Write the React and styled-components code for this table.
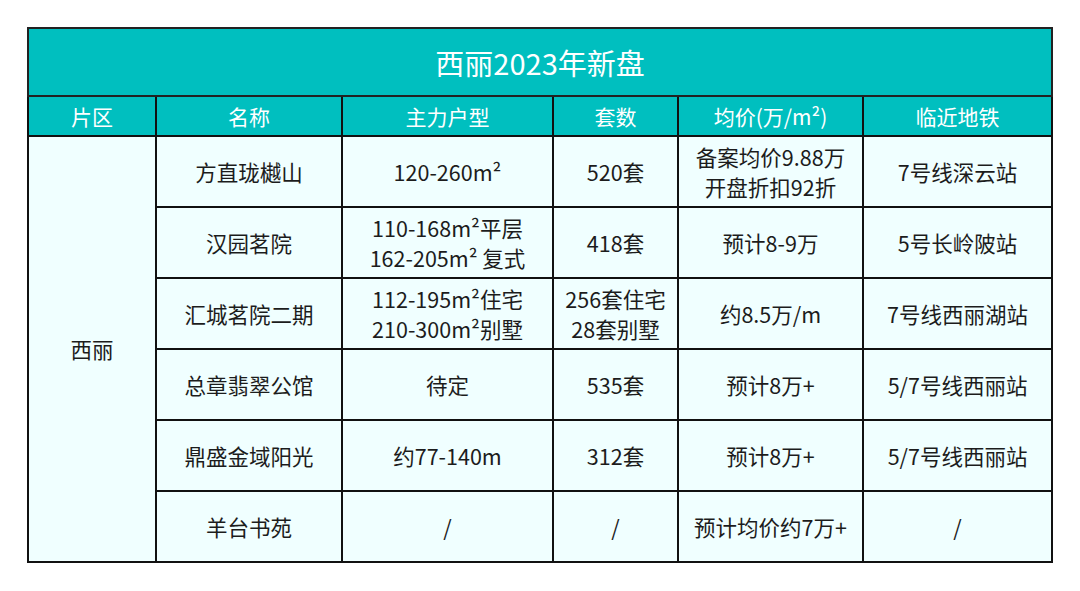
import React from 'react';
import styled, { createGlobalStyle } from 'styled-components';

const GlobalStyle = createGlobalStyle`
  body {
    margin: 0;
    background: #ffffff;
    font-family: "Noto Sans CJK SC", "Noto Sans", sans-serif;
  }
`;

const Page = styled.div`
  padding: 27px 0 0 27px;
`;

const Table = styled.table`
  border-collapse: collapse;
  table-layout: fixed;
  width: 1026px;
  color: #1c1c1c;
  font-size: 21.5px;
  text-align: center;
`;

const TitleCell = styled.th`
  height: 66px;
  padding: 0;
  background: #00bfbf;
  color: #ffffff;
  font-size: 29px;
  font-weight: 400;
  border: 2px solid #222;
`;

const HeadCell = styled.th`
  height: 38px;
  padding: 0;
  background: #00bfbf;
  color: #ffffff;
  font-size: 21px;
  font-weight: 400;
  border: 2px solid #111;
`;

const Cell = styled.td`
  height: 69px;
  padding: 0;
  background: #f0ffff;
  border: 2px solid #111;
  line-height: 30px;
  vertical-align: middle;
`;

const cols = [128, 186, 211, 125, 185, 189];
const heads = ['片区', '名称', '主力户型', '套数', '均价(万/m²)', '临近地铁'];

const rows = [
  ['方直珑樾山', ['120-260m²'], ['520套'], ['备案均价9.88万', '开盘折扣92折'], ['7号线深云站']],
  ['汉园茗院', ['110-168m²平层', '162-205m² 复式'], ['418套'], ['预计8-9万'], ['5号长岭陂站']],
  ['汇城茗院二期', ['112-195m²住宅', '210-300m²别墅'], ['256套住宅', '28套别墅'], ['约8.5万/m'], ['7号线西丽湖站']],
  ['总章翡翠公馆', ['待定'], ['535套'], ['预计8万+'], ['5/7号线西丽站']],
  ['鼎盛金域阳光', ['约77-140m'], ['312套'], ['预计8万+'], ['5/7号线西丽站']],
  ['羊台书苑', ['/'], ['/'], ['预计均价约7万+'], ['/']],
];

function Lines({ items }) {
  return items.map((t, i) => <div key={i}>{t}</div>);
}

export default function App() {
  return (
    <Page>
      <GlobalStyle />
      <Table>
        <colgroup>
          {cols.map((w, i) => <col key={i} style={{ width: w }} />)}
        </colgroup>
        <thead>
          <tr>
            <TitleCell colSpan={6}>西丽2023年新盘</TitleCell>
          </tr>
          <tr>
            {heads.map((h) => <HeadCell key={h}>{h}</HeadCell>)}
          </tr>
        </thead>
        <tbody>
          {rows.map((r, i) => (
            <tr key={r[0]}>
              {i === 0 && <Cell rowSpan={rows.length}>西丽</Cell>}
              <Cell>{r[0]}</Cell>
              <Cell><Lines items={r[1]} /></Cell>
              <Cell><Lines items={r[2]} /></Cell>
              <Cell><Lines items={r[3]} /></Cell>
              <Cell><Lines items={r[4]} /></Cell>
            </tr>
          ))}
        </tbody>
      </Table>
    </Page>
  );
}
